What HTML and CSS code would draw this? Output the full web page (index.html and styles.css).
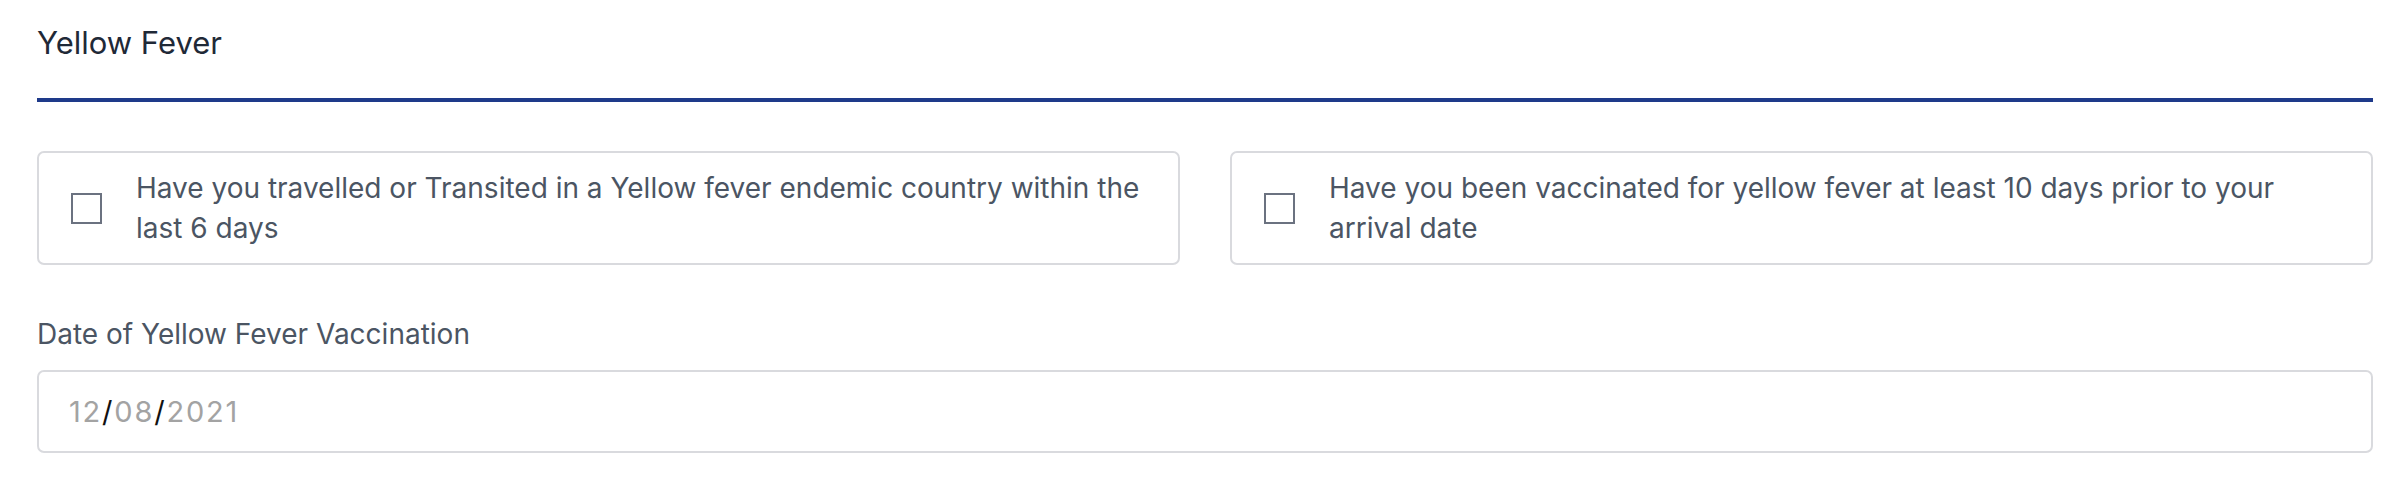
FILE: index.html
```html
<!DOCTYPE html>
<html lang="en">
<head>
<meta charset="utf-8">
<title>Yellow Fever</title>
<link rel="stylesheet" href="styles.css">
</head>
<body>
<section class="section">
  <h2 class="section-title">Yellow Fever</h2>
  <div class="check-grid">
    <label class="check-card">
      <span class="check-box"></span>
      <span class="check-text">Have you travelled or Transited in a Yellow fever endemic country within the last 6 days</span>
    </label>
    <label class="check-card">
      <span class="check-box"></span>
      <span class="check-text">Have you been vaccinated for yellow fever at least 10 days prior to your arrival date</span>
    </label>
  </div>
  <div class="field">
    <div class="field-label">Date of Yellow Fever Vaccination</div>
    <div class="date-input"><span class="seg">12</span><span class="sep">/</span><span class="seg">08</span><span class="sep">/</span><span class="seg">2021</span></div>
  </div>
</section>
</body>
</html>
```
FILE: styles.css
```css
html, body {
  margin: 0;
  padding: 0;
  background: #ffffff;
}
body {
  font-family: "Inter", "Liberation Sans", sans-serif;
  color: #4b5563;
}
.section {
  padding: 0 31px 0 37px;
}
.section-title {
  margin: 0;
  padding-top: 23px;
  padding-bottom: 35px;
  font-size: 31px;
  line-height: 40px;
  font-weight: 400;
  color: #1f2937;
  border-bottom: 4px solid #1e3a8a;
}
.check-grid {
  margin-top: 49px;
  display: grid;
  grid-template-columns: 1fr 1fr;
  column-gap: 50px;
}
.check-card {
  display: flex;
  align-items: center;
  gap: 34px;
  padding: 15px 32px;
  border: 2px solid #d9dade;
  border-radius: 7px;
  font-size: 28px;
  line-height: 40px;
  color: #4b5563;
}
.check-box {
  flex: 0 0 auto;
  box-sizing: border-box;
  width: 31px;
  height: 31px;
  border: 2px solid #6b7280;
  background: #fff;
}
.check-text {
  flex: 1 1 auto;
}
.field {
  margin-top: 51px;
}
.field-label {
  font-size: 28px;
  line-height: 36px;
  color: #4b5563;
}
.date-input {
  margin-top: 18px;
  box-sizing: border-box;
  height: 83px;
  display: flex;
  align-items: center;
  padding-left: 30px;
  border: 2px solid #d9dade;
  border-radius: 7px;
  font-size: 29px;
  letter-spacing: 1.8px;
}
.seg {
  color: #a3a3a3;
}
.sep {
  color: #111111;
}
```
